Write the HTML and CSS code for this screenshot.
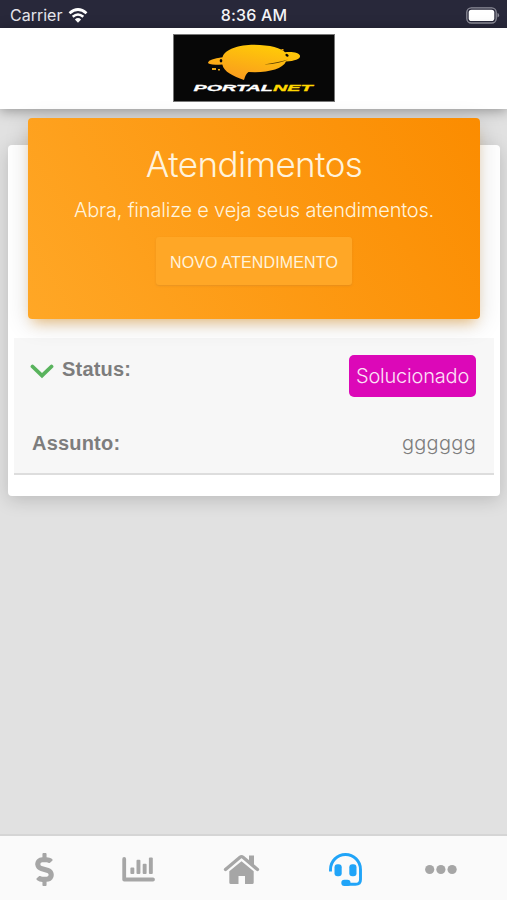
FILE: index.html
```html
<!DOCTYPE html>
<html lang="pt-BR">
<head>
  <meta charset="UTF-8" />
  <meta name="viewport" content="width=device-width, initial-scale=1.0"/>
  <title>Atendimentos</title>
  <link rel="stylesheet" href="styles.css">
</head>
<body>
  <!-- Status bar -->
  <div class="status-bar">
    <div class="carrier">
      <span>Carrier</span>
      <svg class="wifi" viewBox="0 0 20 15" width="20" height="15">
        <path d="M1.5 5.2Q10-2.2 18.5 5.2" fill="none" stroke="#fff" stroke-width="2.8"/>
        <path d="M4.7 8.8Q10 4.2 15.3 8.8" fill="none" stroke="#fff" stroke-width="2.6"/>
        <path d="M6.9 11.4Q10 8.7 13.1 11.4L10 14.7z" fill="#fff"/>
      </svg>
    </div>
    <span class="time">8:36 AM</span>
    <svg class="battery" viewBox="0 0 34 17" width="34" height="17">
      <rect x=".8" y=".8" width="29.4" height="15.2" rx="4.5" fill="none" stroke="#8d8d99" stroke-width="1.3"/>
      <rect x="2.7" y="2.8" width="25.6" height="11.2" rx="2.8" fill="#fff"/>
      <path d="M31.5 6v4.6q1.6-.5 1.6-2.3T31.5 6z" fill="#8d8d99"/>
    </svg>
  </div>

  <header class="header">
    <svg class="logo" viewBox="0 0 162 68" width="162" height="68">
      <defs>
        <linearGradient id="planet" x1="0" y1="1" x2=".5" y2="0">
          <stop offset="0" stop-color="#f99422"/>
          <stop offset="1" stop-color="#ffc808"/>
        </linearGradient>
      </defs>
      <rect x=".5" y=".5" width="161" height="67" fill="#070707" stroke="#777"/>
      <path d="M35 28.6Q36 25 49.5 23.3C52 15 66 10.8 81 10.8C97 10.8 109 14.5 112 18.2C120 17.5 126.5 18.8 127 21.8C127.5 24.8 122 26.8 113 27.6C110 34.5 97 38.2 82 38.2L75.5 38Q72.5 40 71 46C60 42 51 38 49.3 30.5Q35 31.5 35 28.6z" fill="url(#planet)"/>
      <path d="M91 30.5Q107 28 115 25.4Q108 29.5 91 30.5z" fill="#5d4100"/>
      <ellipse cx="48" cy="26.7" rx="1.3" ry="1.8" fill="#070707"/>
      <ellipse cx="114" cy="21.2" rx="1.8" ry="1.2" fill="#070707" transform="rotate(35 114 21.2)"/>
      <path d="M39 34h4v2h-4zM45 35h2v1.5h-2zM108.5 15h2v1.5h-2z" fill="#e9a315"/>
      <text class="logo-text" x="20.5" y="56.7" textLength="119" lengthAdjust="spacingAndGlyphs">PORTAL<tspan class="logo-net">NET</tspan></text>
    </svg>
  </header>

  <main class="content">
    <section class="card">
      <div class="card-header">
        <h1>Atendimentos</h1>
        <p>Abra, finalize e veja seus atendimentos.</p>
        <button class="btn">NOVO ATENDIMENTO</button>
      </div>

      <div class="ticket">
        <div class="row">
          <div class="label">
            <svg class="chevron" viewBox="0 0 24 15" width="24" height="15">
              <path d="M2.5 2.5L12 11.7L21.5 2.5" fill="none" stroke="#59b35d" stroke-width="3.8" stroke-linecap="round"/>
            </svg>
            <strong>Status:</strong>
          </div>
          <span class="badge">Solucionado</span>
        </div>
        <div class="row subject">
          <strong>Assunto:</strong>
          <span class="value">gggggg</span>
        </div>
      </div>
    </section>
  </main>

  <nav class="tabs">
    <a href="#financeiro" aria-label="Financeiro">
      <svg viewBox="0 0 288 512" width="19" height="33">
        <path d="M209.2 233.4l-108-31.6C88.7 198.2 80 186.5 80 173.5c0-16.3 13.2-29.5 29.5-29.5h66.3c12.2 0 24.2 3.7 34.2 10.5 6.1 4.1 14.3 3.1 19.5-2l34.8-34c7.1-6.9 6.1-18.4-1.8-24.5C238 74.8 207.4 64.1 176 64V16c0-8.8-7.2-16-16-16h-32c-8.8 0-16 7.2-16 16v48h-2.5C45.8 64-5.4 118.7.5 183.6c4.2 46.1 39.4 83.6 83.8 96.6l102.5 30c12.5 3.7 21.2 15.3 21.2 28.3 0 16.3-13.2 29.5-29.5 29.5h-66.3C100 368 88 364.3 78 357.5c-6.1-4.1-14.3-3.1-19.5 2l-34.8 34c-7.1 6.9-6.1 18.4 1.8 24.5 24.5 19.2 55.1 29.9 86.5 30v48c0 8.8 7.2 16 16 16h32c8.8 0 16-7.2 16-16v-48.2c46.6-.9 90.3-28.6 105.7-72.7 21.5-61.6-14.6-124.8-72.5-141.7z"/>
      </svg>
    </a>
    <a href="#consumo" aria-label="Consumo">
      <svg viewBox="0 0 33 33" width="33" height="33">
        <path d="M2.2 6V26.5H31" fill="none" stroke="currentColor" stroke-width="3.8" stroke-linecap="round" stroke-linejoin="round"/>
        <rect x="8.4" y="14.5" width="3.9" height="6.5" rx="1"/>
        <rect x="14.5" y="6.7" width="3.9" height="14.3" rx="1"/>
        <rect x="20.7" y="10.7" width="3.9" height="10.3" rx="1"/>
        <rect x="26.9" y="4.4" width="3.9" height="16.6" rx="1"/>
      </svg>
    </a>
    <a href="#inicio" aria-label="Início">
      <svg viewBox="0 0 37 33" width="37" height="33">
        <path d="M2.5 16.5L17 4.2Q18.5 3 20 4.2L34.5 16.5" fill="none" stroke="currentColor" stroke-width="3.3" stroke-linecap="round"/>
        <path d="M26 2.5h5v10.5l-5-4.2z"/>
        <path d="M6.3 18.3L18.5 8.2L30.7 18.3V29.5Q30.7 31 29.3 31H22V23H15.5V31H7.8Q6.3 31 6.3 29.5z"/>
      </svg>
    </a>
    <a href="#atendimentos" class="active" aria-label="Atendimentos">
      <svg viewBox="0 0 33 33" width="33" height="33">
        <path d="M1.5 18.5V16.5A15 15 0 0 1 31.5 16.5V26.5Q31.5 31.3 26.5 31.3H16" fill="none" stroke="currentColor" stroke-width="2.9"/>
        <rect x="5.5" y="11.3" width="7.2" height="12" rx="3"/>
        <rect x="20.3" y="11.3" width="7.2" height="12" rx="3"/>
        <rect x="12.3" y="26.7" width="9.2" height="6.2" rx="3"/>
      </svg>
    </a>
    <a href="#mais" aria-label="Mais">
      <svg viewBox="0 0 32 33" width="32" height="33">
        <circle cx="4.7" cy="16.5" r="4.6"/>
        <circle cx="15.9" cy="16.5" r="4.6"/>
        <circle cx="27.1" cy="16.5" r="4.6"/>
      </svg>
    </a>
  </nav>
</body>
</html>
```
FILE: styles.css
```css
* {
  box-sizing: border-box;
}

body {
  font-family: Inter, "Liberation Sans", sans-serif;
  margin: 0;
  height: 900px;
  display: flex;
  flex-direction: column;
  background: #e1e1e1;
  overflow: hidden;
}

.status-bar {
  height: 28px;
  padding: 2px 7px 0 10px;
  display: grid;
  grid-template-columns: 1fr auto 1fr;
  align-items: center;
  background: #28283a;
  color: #f5f5f8;
  font-size: 16px;
}

.carrier {
  display: flex;
  align-items: center;
  gap: 6px;
  color: #e5e5ec;
}

.time {
  margin-right: 2px;
  font-weight: 500;
  font-size: 16px;
  letter-spacing: 0.2px;
}

.battery {
  justify-self: end;
}

.header {
  height: 81px;
  padding-top: 6px;
  display: flex;
  justify-content: center;
  background: #fff;
  box-shadow: 0 2px 12px rgba(0, 0, 0, 0.35);
}

.logo-text {
  font-family: "Liberation Sans", sans-serif;
  font-weight: 700;
  font-style: italic;
  font-size: 9.8px;
  fill: #fff;
  stroke: #fff;
  stroke-width: 0.3px;
}

.logo-net {
  fill: #ffd800;
  stroke: #ffd800;
}

.content {
  flex: 1;
  padding: 36px 7px 0 8px;
}

.card {
  height: 351px;
  padding: 0 6px 20px;
  background: #fff;
  border-radius: 4px;
  box-shadow: 0 4px 18px rgba(0, 0, 0, 0.17);
}

.card-header {
  position: relative;
  top: -27px;
  height: 201px;
  margin: 0 14px;
  display: flex;
  flex-direction: column;
  align-items: center;
  background: linear-gradient(60deg, #ffa726, #fb8c00);
  color: #fff3dc;
  border-radius: 4px;
  box-shadow: 0 5px 24px rgba(0, 0, 0, 0.14), 0 8px 12px -5px rgba(255, 152, 0, 0.45);
}

.card-header h1 {
  margin: 24px 0 0;
  font-weight: 300;
  font-size: 35px;
  line-height: 44px;
  letter-spacing: -0.6px;
}

.card-header p {
  margin: 11px 0 0;
  font-weight: 300;
  font-size: 20px;
  line-height: 26px;
  letter-spacing: -0.2px;
  white-space: nowrap;
}

.btn {
  width: 196px;
  height: 48px;
  margin-top: 14px;
  padding: 3px 0 0;
  border: none;
  border-radius: 3px;
  background: #ffa726;
  color: #fff3dc;
  font-family: "Liberation Sans", sans-serif;
  font-size: 16px;
  letter-spacing: 0.15px;
  box-shadow: 0 1px 2px rgba(180, 120, 50, 0.3);
}

.ticket {
  height: 137px;
  margin-top: -8px;
  padding: 17px 18px 0;
  background: #f7f7f7;
  border-bottom: 2px solid #ddd;
  color: #7d7d7d;
  font-size: 20px;
}

.ticket strong {
  font-family: "Liberation Sans", sans-serif;
  font-weight: 700;
  line-height: 24px;
  letter-spacing: 0.2px;
}

.row {
  display: flex;
  justify-content: space-between;
  align-items: flex-start;
}

.label {
  display: flex;
  align-items: center;
  gap: 8px;
  margin: 2px 0 0 -2px;
}

.chevron {
  margin-top: 4px;
}

.badge {
  width: 127px;
  height: 42px;
  border-radius: 5px;
  background: #dc08b8;
  color: #fce1f7;
  font-weight: 300;
  line-height: 42px;
  letter-spacing: -0.2px;
  text-align: center;
}

.subject {
  margin-top: 34px;
}

.value {
  font-weight: 300;
  line-height: 24px;
  letter-spacing: 0.3px;
}

.tabs {
  height: 66px;
  padding: 17px 0 0 35px;
  display: grid;
  grid-template-columns: 87px 101px 106px 96px auto;
  background: #fafafa;
  border-top: 2px solid #d5d5d5;
}

.tabs a {
  color: #a6a6a6;
}

.tabs a.active {
  color: #20a4f8;
}

.tabs svg {
  display: block;
  fill: currentColor;
}
```
